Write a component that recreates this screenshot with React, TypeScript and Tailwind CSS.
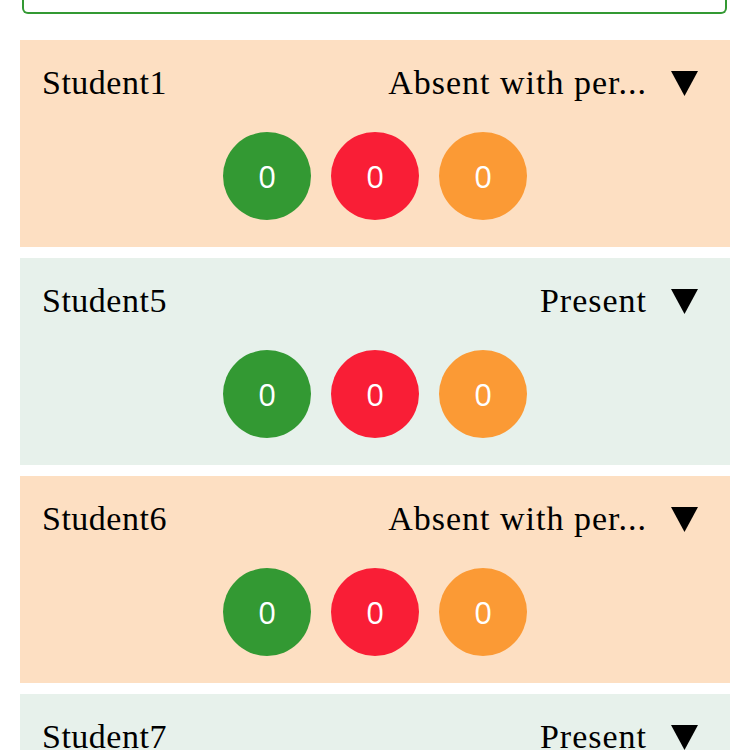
import React from 'react';

type Student = { name: string; status: string; present: boolean };

const students: Student[] = [
  { name: 'Student1', status: 'Absent with per...', present: false },
  { name: 'Student5', status: 'Present', present: true },
  { name: 'Student6', status: 'Absent with per...', present: false },
  { name: 'Student7', status: 'Present', present: true },
];

function Counter({ color }: { color: string }) {
  return (
    <div
      className={`w-[88px] h-[88px] rounded-full flex items-center justify-center text-white text-[31px] ${color}`}
      style={{ fontFamily: '"Open Sans", sans-serif' }}
    >
      0
    </div>
  );
}

function StudentCard({ student }: { student: Student }) {
  return (
    <div className={`w-[710px] h-[207px] shrink-0 ${student.present ? 'bg-[#e7f1eb]' : 'bg-[#fddfc2]'}`}>
      <div className="flex items-center justify-between pl-[22px] pr-[32px] h-[86px]">
        <span className="text-[34px] tracking-[0.5px] text-black leading-none">{student.name}</span>
        <div className="flex items-center gap-[24px]">
          <span className="text-[34px] tracking-[1px] text-black leading-none">{student.status}</span>
          <svg width="27" height="25" viewBox="0 0 27 25">
            <polygon points="0,0 27,0 13.5,25" fill="#000" />
          </svg>
        </div>
      </div>
      <div className="flex justify-center gap-[20px] pt-[6px]">
        <Counter color="bg-[#339933]" />
        <Counter color="bg-[#f91e36]" />
        <Counter color="bg-[#fb9a35]" />
      </div>
    </div>
  );
}

export default function App() {
  return (
    <div className="w-[750px] h-[750px] overflow-hidden bg-white" style={{ fontFamily: '"Liberation Serif", serif' }}>
      <div className="ml-[22px] w-[705px] h-[14px] border-2 border-t-0 border-[#339933] rounded-b-[6px]" />
      <div className="flex flex-col gap-[11px] pl-[20px] pt-[26px]">
        {students.map((s) => (
          <StudentCard key={s.name} student={s} />
        ))}
      </div>
    </div>
  );
}
